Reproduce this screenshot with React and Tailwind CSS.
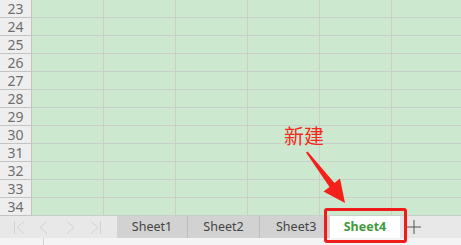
import React from 'react'

const rows = [23, 24, 25, 26, 27, 28, 29, 30, 31, 32, 33, 34]
const cols = [0, 1, 2, 3, 4, 5]

function NavIcons() {
  return (
    <svg width="117" height="22" viewBox="0 0 117 22" className="block">
      <g fill="none" stroke="#d2d2d2" strokeWidth="1">
        <path d="M14.5 5v13" />
        <path d="M24 5.5l-7 6 7 6" />
        <path d="M47 5.5l-7 6 7 6" />
        <path d="M67 5.5l7 6-7 6" />
        <path d="M91 5.5l7 6-7 6" />
        <path d="M100.5 5v13" />
      </g>
    </svg>
  )
}

export default function App() {
  return (
    <div className="relative w-[461px] h-[245px] overflow-hidden bg-[#f4f4f4]" style={{ fontFamily: '"Noto Sans", "Open Sans", sans-serif' }}>
      {/* sheet grid */}
      <div className="flex flex-col h-[216px]">
        {rows.map(r => (
          <div key={r} className="flex h-[18px] shrink-0">
            <div className="w-[32px] shrink-0 bg-[#eeeeee] border-r border-b border-[#c4c4c4] flex items-center justify-center text-[14px] leading-none text-[#6e6e6e]">
              {r}
            </div>
            {cols.map(c => (
              <div key={c} className="w-[72px] shrink-0 bg-[#cce8cf] border-r border-b border-[#c9cfc9]" />
            ))}
          </div>
        ))}
      </div>

      {/* tab bar */}
      <div className="flex h-[22px] bg-[#e8e8e8] text-[12.5px] text-[#444]">
        <div className="w-[117px] shrink-0">
          <NavIcons />
        </div>
        <div className="w-[71px] shrink-0 bg-[#d2d2d2] border-r border-[#bdbdbd] flex items-center justify-center">Sheet1</div>
        <div className="w-[72px] shrink-0 bg-[#d2d2d2] border-r border-[#bdbdbd] flex items-center justify-center">Sheet2</div>
        <div className="w-[70px] shrink-0 bg-[#d2d2d2] flex items-center justify-start pl-[16px]">Sheet3</div>
        <div className="w-[70px] shrink-0 bg-white flex items-center justify-center font-bold text-[#3f9a3a]">Sheet4</div>
        <div className="w-[28px] shrink-0 flex items-center justify-center">
          <svg width="14" height="14" viewBox="0 0 14 14">
            <path d="M7 0v14M0 7h14" stroke="#555" strokeWidth="1" />
          </svg>
        </div>
      </div>

      {/* status strip */}
      <div className="flex h-[7px]">
        <div className="w-[44px] border-r border-[#d0d0d0]" />
      </div>

      {/* annotation */}
      <div className="absolute left-[284px] top-[122px] text-[20px] leading-[28px] text-[#f5281c]" style={{ fontFamily: '"Noto Sans CJK SC", sans-serif' }}>
        新建
      </div>
      <svg className="absolute left-0 top-0" width="461" height="245" viewBox="0 0 461 245">
        <polygon points="306,152.6 307.6,151.4 334.5,183 340,178.5 345,203 323.5,191.5 329.5,187" fill="#f5201a" />
      </svg>
      <div className="absolute left-[324px] top-[208px] w-[83px] h-[35px] border-[3px] border-[#f01c1c] rounded-[3px]" />
    </div>
  )
}
